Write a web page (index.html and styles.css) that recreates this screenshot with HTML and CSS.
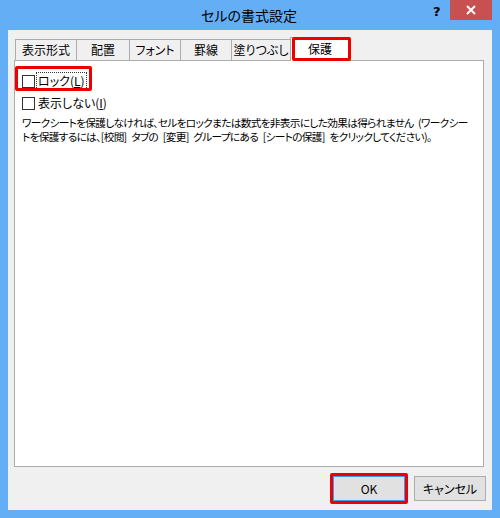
FILE: index.html
```html
<!DOCTYPE html>
<html lang="ja">
<head>
<meta charset="utf-8">
<title>セルの書式設定</title>
<link rel="stylesheet" href="styles.css">
</head>
<body>
<div class="window">
  <div class="titlebar">
    <div class="title">セルの書式設定</div>
    <div class="help">?</div>
    <div class="close">
      <svg width="10" height="10" viewBox="0 0 10 10"><path d="M1 1L9 9M9 1L1 9" stroke="#fff" stroke-width="2"/></svg>
    </div>
  </div>
  <div class="client">
    <div class="tabs">
      <div class="tab w1">表示形式</div>
      <div class="tab w2">配置</div>
      <div class="tab w3">フォント</div>
      <div class="tab w4">罫線</div>
      <div class="tab w5">塗りつぶし</div>
      <div class="tab active mark-tab">保護</div>
    </div>
    <div class="panel">
      <div class="check-row mark-lock">
        <span class="box"></span>
        <span class="label focus">ロック(<u>L</u>)</span>
      </div>
      <div class="check-row">
        <span class="box"></span>
        <span class="label">表示しない(<u>I</u>)</span>
      </div>
      <p class="note">ワークシートを保護しなければ、セルをロックまたは数式を非表示にした効果は得られません (ワークシー<br>トを保護するには、[校閲] タブの [変更] グループにある [シートの保護] をクリックしてください)。</p>
    </div>
    <div class="buttons">
      <button class="btn default mark-ok">OK</button>
      <button class="btn">キャンセル</button>
    </div>
  </div>
</div>
</body>
</html>
```

FILE: styles.css
```css
html, body {
  margin: 0;
  padding: 0;
}
body {
  width: 500px;
  height: 518px;
  background: #63aef5;
  font-family: "Noto Sans CJK JP", sans-serif;
  font-feature-settings: "palt";
  color: #000;
  overflow: hidden;
}
.window {
  display: flex;
  flex-direction: column;
  height: 518px;
}
.titlebar {
  height: 30px;
  position: relative;
  display: flex;
  align-items: center;
  justify-content: center;
}
.title {
  font-size: 14px;
  line-height: 30px;
  color: #000;
  margin-left: -2px;
}
.help {
  position: absolute;
  left: 433px;
  top: 4px;
  font-size: 13px;
  font-weight: bold;
  font-family: "DejaVu Sans", sans-serif;
  color: #000;
}
.close {
  position: absolute;
  left: 450px;
  top: 0;
  width: 42px;
  height: 20px;
  background: #c75050;
  display: flex;
  align-items: center;
  justify-content: center;
}
.client {
  margin: 0 8px 8px 8px;
  height: 480px;
  background: #f0f0f0;
  box-sizing: border-box;
  padding: 7px 8px 0 6px;
  display: flex;
  flex-direction: column;
}
.tabs {
  display: flex;
  align-items: flex-end;
  height: 23px;
  padding-left: 1px;
  position: relative;
  z-index: 1;
}
.tab {
  height: 21px;
  box-sizing: border-box;
  border: 1px solid #acacac;
  border-bottom: none;
  margin-right: -1px;
  background: #f0f0f0;
  font-size: 12px;
  line-height: 20px;
  text-align: center;
}
.w1 { width: 62px; }
.w2 { width: 54px; }
.w3 { width: 52px; }
.w4 { width: 52px; }
.w5 { width: 60px; }
.tab.active {
  width: 60px;
  height: 24px;
  background: #fff;
  margin-bottom: -1px;
  line-height: 22px;
  position: relative;
}
.mark-tab::after {
  content: "";
  position: absolute;
  left: 1px;
  top: -1px;
  right: -2px;
  bottom: 0;
  border: 3px solid #ee0000;
  border-radius: 2px;
}
.panel {
  height: 407px;
  box-sizing: border-box;
  background: #fff;
  border: 1px solid #acacac;
  padding: 9px 0 0 7px;
}
.check-row {
  display: flex;
  align-items: center;
  height: 22px;
  font-size: 12px;
  position: relative;
}
.check-row .box {
  width: 13px;
  height: 13px;
  box-sizing: border-box;
  border: 1px solid #333;
  background: #fff;
  margin-right: 2px;
}
.label {
  line-height: 16px;
  padding: 0 1px;
}
.focus {
  outline: 1px dotted #333;
  outline-offset: 0;
}
.mark-lock::after {
  content: "";
  position: absolute;
  left: -7px;
  top: -4px;
  width: 77px;
  height: 25px;
  box-sizing: border-box;
  border: 3px solid #ee0000;
  border-radius: 2px;
}
.note {
  margin: 2px 0 0 0;
  font-size: 10.7px;
  letter-spacing: -0.7px;
  word-spacing: 3px;
  line-height: 14px;
  white-space: nowrap;
}
.buttons {
  display: flex;
  justify-content: flex-end;
  gap: 9px;
  padding-top: 9px;
  margin-right: -2px;
}
.btn {
  width: 72px;
  height: 25px;
  box-sizing: border-box;
  background: #e1e1e1;
  border: 1px solid #adadad;
  font-family: "Noto Sans CJK JP", sans-serif;
  font-feature-settings: "palt";
  font-size: 12px;
  padding: 0;
  color: #000;
  position: relative;
}
.btn.default {
  border: 1px solid #3c9bf0;
  box-shadow: inset 0 0 0 1px #cfe6fb;
}
.mark-ok::after {
  content: "";
  position: absolute;
  left: -4px;
  top: -4px;
  right: -4px;
  bottom: -4px;
  border: 3px solid #ee0000;
  border-radius: 2px;
}
```
